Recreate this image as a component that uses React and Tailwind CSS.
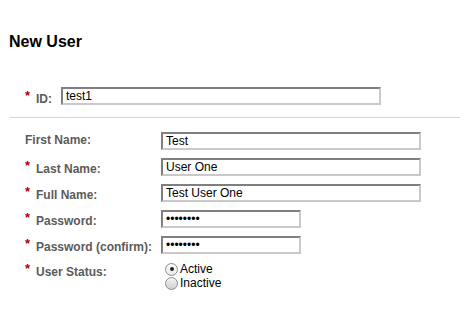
import { useState } from "react";

const inputCls =
  "h-[18px] border-2 border-t-[#7f7f7f] border-l-[#7f7f7f] border-b-[#c9c9c9] border-r-[#c9c9c9] bg-white pl-[3px] text-[12px] leading-[14px] text-black outline-none";

function Star() {
  return (
    <span className="relative -top-[3px] inline-block w-[11px] text-[13px] font-bold leading-none text-[#b00000]">
      *
    </span>
  );
}

function Row({ label, required, value, type = "text", width }) {
  return (
    <div className="flex h-[26px] items-start">
      <label
        className={`w-[136px] text-[12px] font-bold leading-[14px] text-[#5b5b5b] ${
          required ? "pt-[4px]" : "pt-[1px]"
        }`}
      >
        {required && <Star />}
        {label}
      </label>
      <input className={`${inputCls} ${width}`} type={type} value={value} readOnly />
    </div>
  );
}

function Radio({ checked, label, onClick }) {
  return (
    <div className="flex h-[14px] cursor-pointer items-center" onClick={onClick}>
      <span
        className={`flex h-[13px] w-[13px] items-center justify-center rounded-full border border-[#8c8c8c] ${
          checked ? "bg-gradient-to-b from-white to-[#e8e8e8]" : "bg-gradient-to-b from-[#f4f4f4] to-[#cfcfcf]"
        }`}
      >
        {checked && <span className="h-[4px] w-[4px] rounded-full bg-[#222]" />}
      </span>
      <span className="ml-[2px] text-[12px] leading-[14px] text-black">{label}</span>
    </div>
  );
}

export default function App() {
  const [status, setStatus] = useState("active");

  return (
    <div className="h-[319px] w-[460px] overflow-hidden bg-white font-['Liberation_Sans',Arial,sans-serif]">
      <h2 className="pl-[9px] pt-[32px] text-[16px] font-bold leading-[20px] text-black">New User</h2>

      {/* ID */}
      <div className="mt-[35px] flex items-start pl-[25px]">
        <label className="w-[36px] pt-[5px] text-[12px] font-bold leading-[14px] text-[#5b5b5b]">
          <Star />
          ID:
        </label>
        <input className={`${inputCls} w-[320px]`} value="test1" readOnly />
      </div>

      <div className="ml-[10px] mt-[11px] h-px bg-[#d3d7db]" />

      {/* Details */}
      <div className="mt-[14px] pl-[25px]">
        <Row label="First Name:" value="Test" width="w-[260px]" />
        <Row label="Last Name:" required value="User One" width="w-[260px]" />
        <Row label="Full Name:" required value="Test User One" width="w-[260px]" />
        <Row label="Password:" required value="password" type="password" width="w-[140px]" />
        <Row label="Password (confirm):" required value="password" type="password" width="w-[140px]" />
        <div className="flex items-start">
          <label className="w-[136px] pt-[3px] text-[12px] font-bold leading-[14px] text-[#5b5b5b]">
            <Star />
            User Status:
          </label>
          <div className="ml-[4px] flex flex-col">
            <Radio checked={status === "active"} label="Active" onClick={() => setStatus("active")} />
            <Radio checked={status === "inactive"} label="Inactive" onClick={() => setStatus("inactive")} />
          </div>
        </div>
      </div>
    </div>
  );
}
